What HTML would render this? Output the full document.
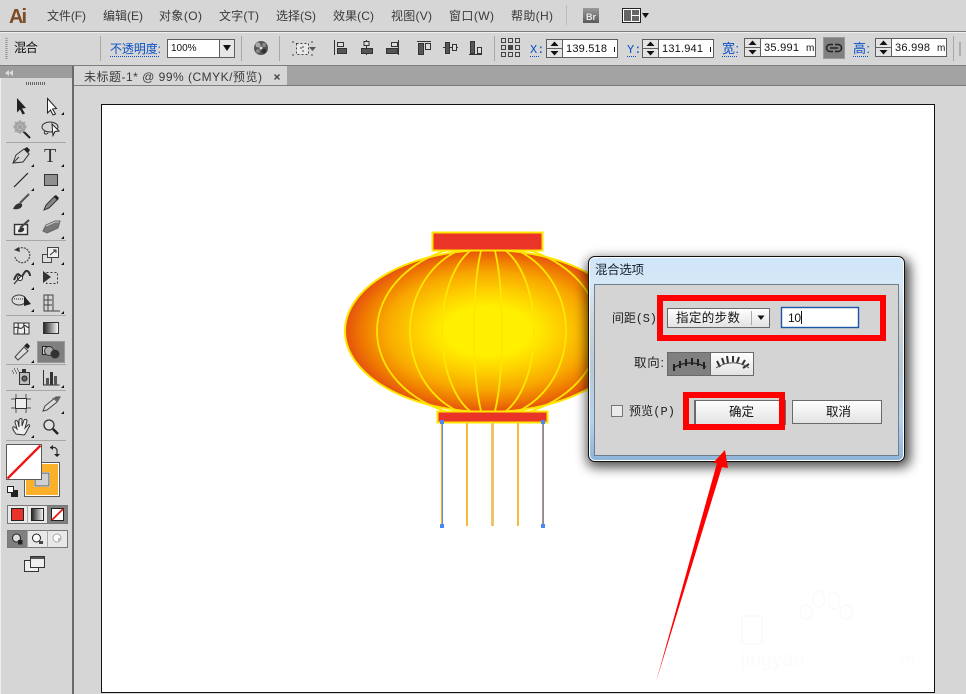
<!DOCTYPE html>
<html><head><meta charset="utf-8"><title>混合选项</title>
<style>
html,body{margin:0;padding:0;background:#d6d6d6;width:966px;height:694px;overflow:hidden}
svg{display:block}
text{font-family:"Liberation Sans","Noto Sans CJK SC",sans-serif;font-size:12px;fill:#2a2a2a}
.b{fill:#0a4fc4}
.d{stroke:#0a4fc4;stroke-width:1;stroke-dasharray:1 1;fill:none}
.m{fill:#3a3a3a}
.t{font-family:"Liberation Mono","Noto Sans CJK SC",monospace}
.n{fill:#111;font-size:11px}
</style></head><body>
<svg width="966" height="694" viewBox="0 0 966 694" xmlns="http://www.w3.org/2000/svg">
<defs>
<radialGradient id="lg" cx="488" cy="331" r="1" gradientUnits="userSpaceOnUse" gradientTransform="translate(488 331) scale(143 81) translate(-488 -331)">
<stop offset="0.3" stop-color="#fff000"/><stop offset="0.5" stop-color="#fed000"/><stop offset="0.72" stop-color="#f8a800"/><stop offset="0.88" stop-color="#ef7a00"/><stop offset="1" stop-color="#e6500f"/>
</radialGradient>
<clipPath id="cl"><rect x="340" y="251" width="300" height="160"/></clipPath>
<linearGradient id="bt" x1="0" y1="0" x2="0" y2="1"><stop offset="0" stop-color="#ffffff"/><stop offset="1" stop-color="#e2e2e2"/></linearGradient>
<linearGradient id="fr" x1="0" y1="0" x2="0" y2="1"><stop offset="0" stop-color="#cfe5f9"/><stop offset="0.13" stop-color="#d6e8f8"/><stop offset="0.3" stop-color="#cfd6da"/><stop offset="0.55" stop-color="#b9c9d6"/><stop offset="0.8" stop-color="#b4d2ee"/><stop offset="1" stop-color="#8fb5da"/></linearGradient>
<linearGradient id="gr" x1="0" y1="0" x2="1" y2="0"><stop offset="0" stop-color="#222"/><stop offset="1" stop-color="#fff"/></linearGradient>
<linearGradient id="grv" x1="0" y1="0" x2="0" y2="1"><stop offset="0" stop-color="#9a9a9a"/><stop offset="1" stop-color="#5a5a5a"/></linearGradient>
<filter id="sh" x="-20%" y="-20%" width="140%" height="140%"><feGaussianBlur stdDeviation="6"/></filter>
</defs>

<rect width="966" height="694" fill="#d6d6d6"/>

<!-- menu bar -->
<text x="9" y="23" style="font-size:20px;font-weight:bold;fill:#7a4c28" textLength="18">Ai</text>
<g class="menu">
<text class="m" x="47" y="20" textLength="39">文件(F)</text>
<text class="m" x="103" y="20" textLength="40">编辑(E)</text>
<text class="m" x="159" y="20" textLength="43">对象(O)</text>
<text class="m" x="219" y="20" textLength="40">文字(T)</text>
<text class="m" x="276" y="20" textLength="40">选择(S)</text>
<text class="m" x="333" y="20" textLength="41">效果(C)</text>
<text class="m" x="391" y="20" textLength="41">视图(V)</text>
<text class="m" x="449" y="20" textLength="45">窗口(W)</text>
<text class="m" x="511" y="20" textLength="42">帮助(H)</text>
</g>
<rect x="566" y="5" width="1" height="20" fill="#bcbcbc"/>
<rect x="583" y="8" width="16" height="15" fill="url(#grv)"/>
<text x="586" y="20" style="font-size:9px;font-weight:bold;fill:#e8e8e8">Br</text>
<rect x="622.500" y="8.500" width="18" height="14" fill="#fff" stroke="#222"/>
<rect x="624" y="10" width="7" height="11" fill="#666"/><rect x="632" y="10" width="7" height="5" fill="#666"/><rect x="632" y="16" width="7" height="5" fill="#666"/>
<path d="M642 13h7l-3.500 5z" fill="#111"/>

<rect x="0" y="31" width="966" height="1" fill="#7d7d7d"/>
<rect x="0" y="32" width="966" height="1" fill="#efefef"/>

<!-- control bar -->
<path d="M6.500 38v21" stroke="#8c8c8c" stroke-width="2" stroke-dasharray="1 1"/>
<text x="14" y="52" style="font-size:12.500px;fill:#111" textLength="24">混合</text>
<rect x="100" y="36" width="1" height="25" fill="#a8a8a8"/>
<text class="b" x="110" y="53" textLength="51">不透明度:</text><path class="d" d="M110 56.500h50"/>
<rect x="167.500" y="39.500" width="67" height="18" fill="#fff" stroke="#5e5e5e"/>
<text x="171" y="51" class="n" style="font-size:10px">100%</text>
<rect x="219.500" y="39.500" width="15" height="18" fill="#e6e6e6" stroke="#5e5e5e"/>
<path d="M223 45h8l-4 6z" fill="#111"/>
<rect x="241" y="36" width="1" height="25" fill="#a8a8a8"/>
<circle cx="261" cy="48" r="7" fill="#555"/><circle cx="258" cy="45" r="2.500" fill="#aaa"/><circle cx="264" cy="45" r="2" fill="#888"/><circle cx="258" cy="51" r="2" fill="#888"/><circle cx="264" cy="51" r="2.500" fill="#333"/><circle cx="261" cy="48" r="1.500" fill="#ddd"/>
<rect x="279" y="36" width="1" height="25" fill="#a8a8a8"/>
<rect x="296.500" y="43.500" width="12" height="11" fill="#e8e8e8" stroke="#444" stroke-dasharray="2 2"/>
<path d="M293 41v2M293 56v-2M312 41v2M312 56v-2M300 48h2M303 46v2M303 50v2" stroke="#444" fill="none"/>
<path d="M309 47h7l-3.500 4z" fill="#555"/>
<g fill="#555" stroke="#333">
<path d="M334.500 40v15" fill="none"/><rect x="337.500" y="42.500" width="6" height="4" fill="#ddd"/><rect x="337.500" y="48.500" width="9" height="5"/>
<path d="M366.500 40v15" fill="none"/><rect x="364" y="41.500" width="5" height="4" fill="#ddd"/><rect x="361.500" y="48.500" width="11" height="5"/>
<path d="M398.500 40v15" fill="none"/><rect x="391.500" y="42.500" width="6" height="4" fill="#ddd"/><rect x="386.500" y="48.500" width="11" height="5"/>
<path d="M417 41.500h14" fill="none"/><rect x="418.500" y="43.500" width="5" height="11"/><rect x="425.500" y="43.500" width="5" height="6" fill="#ddd"/>
<path d="M443 47.500h15" fill="none"/><rect x="445.500" y="42.500" width="4" height="11"/><rect x="452.500" y="44.500" width="4" height="6" fill="#ddd"/>
<path d="M469 54.500h13" fill="none"/><rect x="470.500" y="41.500" width="4" height="12"/><rect x="477.500" y="47.500" width="4" height="6" fill="#ddd"/>
</g>
<rect x="494" y="36" width="1" height="25" fill="#a8a8a8"/>
<!-- reference point -->
<g fill="#d6d6d6" stroke="#444">
<rect x="501.500" y="38.500" width="4" height="4"/><rect x="508.500" y="38.500" width="4" height="4"/><rect x="515.500" y="38.500" width="4" height="4"/>
<rect x="501.500" y="45.500" width="4" height="4"/><rect x="508.500" y="45.500" width="4" height="4" fill="#444"/><rect x="515.500" y="45.500" width="4" height="4"/>
<rect x="501.500" y="52.500" width="4" height="4"/><rect x="508.500" y="52.500" width="4" height="4"/><rect x="515.500" y="52.500" width="4" height="4"/>
</g>
<!-- X -->
<text class="b t" x="530" y="53">X:</text><path class="d" d="M530 56.500h9"/>
<rect x="546.500" y="39.500" width="16" height="18" fill="#e4e4e4" stroke="#5e5e5e"/><path d="M546 48.500h16" stroke="#5e5e5e"/><path d="M550.500 46h8l-4-4.500zM550.500 51h8l-4 4.500z" fill="#111"/>
<rect x="562.500" y="39.500" width="55" height="18" fill="#fff" stroke="#5e5e5e"/>
<text x="566" y="52" class="n" textLength="41">139.518</text><rect x="614" y="47" width="1" height="5" fill="#111"/>
<!-- Y -->
<text class="b t" x="627" y="53">Y:</text><path class="d" d="M627 56.500h9"/>
<rect x="642.500" y="39.500" width="16" height="18" fill="#e4e4e4" stroke="#5e5e5e"/><path d="M642 48.500h16" stroke="#5e5e5e"/><path d="M646.500 46h8l-4-4.500zM646.500 51h8l-4 4.500z" fill="#111"/>
<rect x="658.500" y="39.500" width="55" height="18" fill="#fff" stroke="#5e5e5e"/>
<text x="662" y="52" class="n" textLength="41">131.941</text><rect x="710" y="47" width="1" height="5" fill="#111"/>
<!-- W -->
<text class="b" x="722" y="53" style="font-size:13px" textLength="17">宽:</text><path class="d" d="M722 56.500h16"/>
<rect x="744.500" y="38.500" width="16" height="18" fill="#e4e4e4" stroke="#5e5e5e"/><path d="M744 47.500h16" stroke="#5e5e5e"/><path d="M748.500 45h8l-4-4.500zM748.500 50h8l-4 4.500z" fill="#111"/>
<rect x="760.500" y="38.500" width="55" height="18" fill="#fff" stroke="#5e5e5e"/>
<text x="764" y="51" class="n" textLength="35">35.991</text><text x="806" y="51" class="n" style="font-size:10px">m</text>
<!-- link -->
<rect x="823.500" y="37.500" width="21" height="21" fill="#808080" stroke="#999"/>
<path d="M833 44.500h-3a3.500 3.500 0 0 0 0 7h3M835 44.500h3a3.500 3.500 0 0 1 0 7h-3M830 48h8" fill="none" stroke="#222" stroke-width="1.500"/>
<!-- H -->
<text class="b" x="853" y="53" style="font-size:13px" textLength="17">高:</text><path class="d" d="M853 56.500h16"/>
<rect x="875.500" y="38.500" width="16" height="18" fill="#e4e4e4" stroke="#5e5e5e"/><path d="M875 47.500h16" stroke="#5e5e5e"/><path d="M879.500 45h8l-4-4.500zM879.500 50h8l-4 4.500z" fill="#111"/>
<rect x="891.500" y="38.500" width="55" height="18" fill="#fff" stroke="#5e5e5e"/>
<text x="895" y="51" class="n" textLength="35">36.998</text><text x="937" y="51" class="n" style="font-size:10px">m</text>
<rect x="953" y="36" width="1" height="25" fill="#a8a8a8"/>
<path d="M960 42v14" stroke="#888"/>

<rect x="0" y="65" width="966" height="1" fill="#7d7d7d"/>

<!-- document tab row -->
<rect x="287" y="66" width="679" height="19" fill="#a3a3a3"/>
<rect x="73" y="66" width="214" height="19" fill="#d6d6d6"/>
<rect x="73" y="66" width="1" height="19" fill="#eee"/>
<rect x="73" y="85" width="893" height="1" fill="#808080"/>
<rect x="287" y="85" width="679" height="1" fill="#777"/>
<text x="84" y="81" class="m" style="font-size:12px" textLength="178">未标题-1* @ 99% (CMYK/预览)</text>
<path d="M274.500 74.500l5 5M279.500 74.500l-5 5" stroke="#444" stroke-width="1.400"/>

<!-- tool panel -->
<rect x="0" y="66" width="72" height="12" fill="#9c9c9c"/>
<rect x="72" y="66" width="2" height="628" fill="#6a6a6a"/>
<rect x="0" y="78" width="1" height="616" fill="#eee"/>
<path d="M9 70l-4 3 4 3zM13 70l-4 3 4 3z" fill="#ddd"/>
<path d="M26 83.500h19" stroke="#666" stroke-width="3" stroke-dasharray="1 1"/>
<g fill="#a8a8a8">
<rect x="6" y="142" width="60" height="1"/><rect x="6" y="240" width="60" height="1"/><rect x="6" y="315" width="60" height="1"/><rect x="6" y="364" width="60" height="1"/><rect x="6" y="390" width="60" height="1"/><rect x="6" y="440" width="60" height="1"/>
</g>
<!-- corner triangles -->
<g fill="#111">
<path d="M64 112v3h-3zM34 164v3h-3zM64 164v3h-3zM34 188v3h-3zM64 188v3h-3zM64 212v3h-3zM64 236v3h-3zM34 262v3h-3zM64 262v3h-3zM34 287v3h-3zM64 311v3h-3zM34 309v3h-3zM34 360v3h-3zM34 385v3h-3zM64 385v3h-3zM64 411v3h-3zM34 435v3h-3z"/>
</g>
<!-- selection -->
<path d="M17 98l9 10-4 .5 3 5-2.500 1-2.500-5-3 3z" fill="#222"/>
<path d="M47.500 98.500l9 10-4 .5 3 5-2.500 1-2.500-5-3 3z" fill="#fff" stroke="#222"/>
<!-- magic wand -->
<path d="M23 131l7 7" stroke="#222" stroke-width="2"/>
<circle cx="20" cy="127" r="6" fill="#aaa"/><circle cx="20" cy="127" r="3" fill="#ddd"/><path d="M20 120v14M13 127h14M15 122l10 10M25 122l-10 10" stroke="#999"/>
<!-- lasso -->
<ellipse cx="50" cy="127" rx="8" ry="5" fill="none" stroke="#333"/><path d="M45 131c-2 3 1 4 3 2" fill="none" stroke="#333"/>
<path d="M52 124l7 7-4 .5-2 4z" fill="#fff" stroke="#222"/>
<!-- pen -->
<path d="M13 163l3-8 8-6 5 5-6 8z" fill="#d6d6d6" stroke="#333"/><path d="M24 149l3-2 3 3-2 3z" fill="#222"/><path d="M13 163l6-6" stroke="#333"/>
<!-- type -->
<text x="44" y="162" style="font-family:'Liberation Serif',serif;font-size:20px;fill:#333">T</text>
<!-- line -->
<path d="M14 187l14-14" stroke="#222" stroke-width="1.200"/>
<!-- rect -->
<rect x="44.500" y="174.500" width="13" height="11" fill="#8f8f8f" stroke="#333"/>
<!-- brush -->
<path d="M20 203l9-9" stroke="#555" stroke-width="2"/><path d="M13 209c2-5 6-7 9-5 1 3-2 6-9 5z" fill="#333"/>
<!-- pencil -->
<path d="M44 210l2-5 9-9 3 3-9 9z" fill="#888" stroke="#333"/><path d="M54 197l2-2 3 3-2 2z" fill="#222"/>
<!-- blob brush -->
<rect x="14.500" y="224.500" width="13" height="10" fill="#eee" stroke="#333" stroke-width="1.400"/><path d="M20 228l9-8" stroke="#444" stroke-width="2"/><path d="M18 232c0-4 4-5 6-4 1 3-2 5-6 4z" fill="#333"/>
<!-- eraser -->
<path d="M43 231l3-6 9-4 5 0-2 7-11 5z" fill="#777" stroke="#666"/><path d="M46 226l9-4 4 0" stroke="#ccc" fill="none"/>
<!-- rotate -->
<path d="M18 249a7.500 7.500 0 1 1-3 8" fill="none" stroke="#444" stroke-width="1.200" stroke-dasharray="2 1"/><path d="M14 250l5-3 1 5z" fill="#333"/>
<!-- scale -->
<rect x="42.500" y="254.500" width="9" height="8" fill="#ddd" stroke="#444"/><rect x="47.500" y="247.500" width="11" height="10" fill="#eee" stroke="#444"/><path d="M50 255l6-5M53 250h3v3" stroke="#333" fill="none"/>
<!-- warp -->
<path d="M14 280c2-5 4-8 6-4 2 4 4-6 7-5 3 1 3 5 3 5" fill="none" stroke="#333" stroke-width="2"/><circle cx="20" cy="278" r="2.500" fill="#fff" stroke="#222"/><path d="M14 284l7-8" stroke="#222"/>
<!-- free transform -->
<rect x="46.500" y="272.500" width="11" height="11" fill="none" stroke="#333" stroke-dasharray="2 2"/><path d="M43 271l8 6-8 6z" fill="#333"/>
<!-- shape builder -->
<ellipse cx="19" cy="300" rx="7" ry="5" fill="#ddd" stroke="#444"/><path d="M14 299h10" stroke="#222" stroke-dasharray="1 1"/><path d="M24 296l7 8-7 2z" fill="#222"/>
<!-- perspective -->
<path d="M44 295h9v16h-9zM44 300h8M44 305h8M48 295v16M44 311h16" fill="none" stroke="#444"/>
<!-- mesh -->
<rect x="14" y="323" width="15" height="11" fill="#eee" stroke="#333"/><path d="M14 328c4-3 6 3 9-1s4 2 6 0M18 323c1 4-1 7 0 11M24 323c-1 4 2 7 0 11" fill="none" stroke="#222"/>
<!-- gradient -->
<rect x="43.500" y="322.500" width="15" height="11" fill="url(#gr)" stroke="#333"/>
<!-- eyedropper -->
<path d="M15 357l9-10 4 4-10 9z" fill="#ddd" stroke="#444"/><path d="M24 346l3-3 3 3-2 3z" fill="#222"/>
<!-- blend (selected) -->
<rect x="37.500" y="341.500" width="27" height="21" fill="#808080" stroke="#999"/>
<rect x="42.500" y="346.500" width="8" height="8" fill="#ccc" stroke="#222"/><circle cx="49" cy="351" r="4.500" fill="#aaa" stroke="#333"/><circle cx="55" cy="354" r="4.500" fill="#333"/>
<!-- symbol sprayer -->
<rect x="19.500" y="372.500" width="10" height="12" fill="#bbb" stroke="#333"/><circle cx="24.500" cy="378.500" r="2.500" fill="#666" stroke="#222"/><path d="M12 371h1M15 371h1M18 371h1M13 373h1M16 373h1M14 369h1M17 369h1" stroke="#222"/><rect x="22" y="369" width="4" height="3" fill="#333"/>
<!-- graph -->
<path d="M43.500 370v15h16" fill="none" stroke="#333"/><rect x="46" y="378" width="3" height="7" fill="#555"/><rect x="50" y="372" width="3" height="13" fill="#333"/><rect x="54" y="376" width="3" height="9" fill="#555"/>
<!-- artboard -->
<rect x="15.500" y="398.500" width="11" height="10" fill="#eee" stroke="#333"/><path d="M11 399h4M27 399h4M11 408h4M27 408h4M16 394v4M26 394v4M16 409v4M26 409v4" stroke="#555"/>
<!-- slice -->
<path d="M43 411l2-5 11-9 4 0-3 5-10 8z" fill="#ddd" stroke="#444"/><path d="M52 398l8-1-3 5z" fill="#666"/>
<!-- hand -->
<path d="M16 434c-2-3-4-5-3-7 1-1 3 1 4 2l-2-7c0-2 2-2 3 0l1 5 0-7c1-2 3-2 3 0l0 6 2-6c1-1 3-1 3 1l-2 7 3-3c2-1 2 1 1 2-2 3-3 7-5 8z" fill="#eee" stroke="#333"/>
<!-- zoom -->
<circle cx="49" cy="425" r="5" fill="#ddd" stroke="#333" stroke-width="1.300"/><path d="M53 429l5 5" stroke="#222" stroke-width="2.500"/>

<!-- fill & stroke -->
<rect x="24.500" y="462.500" width="35" height="34" fill="#fff" stroke="#5a5a5a"/>
<rect x="26" y="464" width="32" height="31" fill="#fbb02a"/>
<rect x="34" y="472" width="16" height="15" fill="#fff"/>
<rect x="35" y="473" width="14" height="13" fill="#d0d0d0" stroke="#5a5a5a"/>
<rect x="6.500" y="444.500" width="35" height="35" fill="#fff" stroke="#5a5a5a"/>
<path d="M7.500 478.500l33-33" stroke="#f01515" stroke-width="2.300"/>
<path d="M50 447.500h5l2 2v6" fill="none" stroke="#333" stroke-width="1.200"/><path d="M53 445l-3 2.500 3 2.500zM54 454l3 3 3-3z" fill="#222"/>
<rect x="11.500" y="490.500" width="6" height="6" fill="#222" stroke="#222"/>
<rect x="7.500" y="486.500" width="6" height="6" fill="#fff" stroke="#222"/>
<!-- color buttons -->
<rect x="7.500" y="505.500" width="60" height="18" fill="#e8e8e8" stroke="#777"/>
<rect x="47.500" y="505.500" width="20" height="18" fill="#808080" stroke="#777"/>
<rect x="11.500" y="508.500" width="12" height="12" fill="#e8322a" stroke="#222"/>
<rect x="31.500" y="508.500" width="12" height="12" fill="url(#gr)" stroke="#222"/>
<rect x="51.500" y="508.500" width="12" height="12" fill="#fff" stroke="#222"/><path d="M52 520l11-11" stroke="#f01515" stroke-width="1.800"/>
<path d="M27.500 505.500v18" stroke="#aaa"/>
<!-- draw modes -->
<rect x="7.500" y="530.500" width="60" height="17" fill="#e8e8e8" stroke="#777"/>
<rect x="7.500" y="530.500" width="20" height="17" fill="#808080" stroke="#777"/>
<path d="M27.500 530.500v17M47.500 530.500v17" stroke="#aaa"/>
<circle cx="16.500" cy="538" r="4" fill="#ddd" stroke="#222"/><rect x="18" y="540" width="4.500" height="4.500" fill="#222"/>
<circle cx="36.500" cy="538" r="4" fill="#fff" stroke="#222"/><rect x="39" y="541" width="4" height="3" fill="#444"/>
<circle cx="57" cy="538" r="4" fill="#fff" stroke="#aaa"/><rect x="58" y="538" width="3" height="3" fill="#bbb"/>
<!-- screen mode -->
<rect x="24.500" y="560.500" width="14" height="11" fill="#eee" stroke="#333"/>
<rect x="30.500" y="556.500" width="14" height="11" fill="#eee" stroke="#333"/><rect x="31" y="557" width="13" height="2" fill="#555"/>

<!-- artboard -->
<rect x="101.500" y="104.500" width="833" height="588" fill="#fff" stroke="#111"/>

<!-- lantern -->
<ellipse cx="488" cy="331" rx="143" ry="81" fill="url(#lg)" stroke="#ffe600" stroke-width="2"/>
<g clip-path="url(#cl)" fill="none" stroke="#ffe600" stroke-width="1.800">
<ellipse cx="488" cy="331" rx="111" ry="87"/>
<ellipse cx="488" cy="331" rx="78" ry="87"/>
<ellipse cx="488" cy="331" rx="46" ry="87"/>
<ellipse cx="488" cy="331" rx="14" ry="92"/>
</g>
<rect x="432.500" y="232.500" width="110" height="18" fill="#ea3428" stroke="#ffe600" stroke-width="2"/>
<rect x="437.500" y="411.500" width="110" height="11" fill="#ea3428" stroke="#ffe600" stroke-width="2"/>
<rect x="441" y="423" width="1" height="103" fill="#f5a623"/><rect x="442" y="423" width="1" height="103" fill="#5b8ff0"/>
<rect x="466" y="423" width="2" height="103" fill="#fbb83a"/>
<rect x="491" y="423" width="3" height="103" fill="#eec36a"/>
<rect x="517" y="423" width="2" height="103" fill="#fbb83a"/>
<rect x="542" y="423" width="1" height="103" fill="#d9912a"/><rect x="543" y="423" width="1" height="103" fill="#5b8ff0"/>
<g fill="#4a86f5"><rect x="440" y="420" width="4" height="4"/><rect x="541" y="420" width="4" height="4"/><rect x="440" y="524" width="4" height="4"/><rect x="541" y="524" width="4" height="4"/></g>

<!-- watermark -->
<g fill="none" stroke="#fafafa" stroke-width="1.500">
<rect x="742" y="616" width="20" height="28" rx="2"/>
<ellipse cx="819" cy="599" rx="6" ry="8"/><ellipse cx="834" cy="601" rx="6" ry="8"/><ellipse cx="806" cy="612" rx="6" ry="7"/><ellipse cx="846" cy="612" rx="6" ry="7"/>
</g>
<text x="741" y="666" style="font-size:20px;fill:#fbfbfb">jingyan</text>
<text x="900" y="666" style="font-size:18px;fill:#fbfbfb">m</text>

<!-- dialog shadow -->
<rect x="587" y="259" width="323" height="208" rx="8" fill="#000" opacity="0.72" filter="url(#sh)"/>
<!-- dialog -->
<rect x="588" y="256" width="317" height="206" rx="7" fill="#111"/>
<rect x="589" y="257" width="315" height="204" rx="6" fill="#fff"/>
<rect x="590" y="258" width="313" height="202" rx="5" fill="url(#fr)"/>
<rect x="594.500" y="284.500" width="304" height="171" fill="#d4d4d4" stroke="#6e7e8a"/>
<text x="595" y="274" style="font-size:12.500px;fill:#1a2430" textLength="49">混合选项</text>

<text x="612" y="322" class="t" style="fill:#222;font-size:12px" textLength="45">间距(S)</text>
<rect x="667.500" y="308.500" width="102" height="19" fill="url(#bt)" stroke="#6a6a6a"/>
<text x="676" y="322" style="font-size:12.500px;fill:#111" textLength="64">指定的步数</text>
<rect x="751" y="311" width="1" height="14" fill="#aaa"/>
<path d="M757.500 315.500h7l-3.500 4.500z" fill="#111"/>
<rect x="781.500" y="307.500" width="77" height="20" fill="#fff" stroke="#1c54a8" stroke-width="1.400"/>
<text x="788" y="322" style="fill:#111;font-size:12px" textLength="13">10</text>
<rect x="801" y="311" width="1" height="13" fill="#111"/>

<text x="634" y="367" style="fill:#222;font-size:12.500px" textLength="30">取向:</text>
<rect x="667.500" y="352.500" width="43" height="23" fill="#808080" stroke="#6a6a6a"/>
<rect x="710.500" y="352.500" width="43" height="23" fill="url(#bt)" stroke="#6a6a6a"/>
<path d="M674 371v-7M680 368v-7M686 366v-7M692 365v-7M698 366v-7M704 369v-7" stroke="#222" stroke-width="2"/>
<path d="M673 368c10-6 22-7 33-1" fill="none" stroke="#222" stroke-width="1.300"/>
<path d="M717 361l3 6M722 358l2 6M727 356l1 7M733 356v6M739 357l-2 6M745 360l-3 5M749 364l-6 4" stroke="#333" stroke-width="2"/>
<path d="M716 368c10-7 24-7 33 0" fill="none" stroke="#555"/>

<rect x="611.500" y="405.500" width="11" height="11" fill="#eaeaea" stroke="#777"/>
<text x="629" y="415" class="t" style="fill:#222;font-size:12px" textLength="46">预览(P)</text>

<rect x="694.500" y="400.500" width="91" height="24" fill="url(#bt)" stroke="#6a6a6a"/>
<rect x="694" y="400" width="2" height="25" fill="#6a6a6a"/>
<text x="729" y="416" style="fill:#111;font-size:12.500px" textLength="25">确定</text>
<rect x="792.500" y="400.500" width="89" height="23" fill="url(#bt)" stroke="#6a6a6a"/>
<text x="826" y="416" style="fill:#111;font-size:12.500px" textLength="25">取消</text>

<!-- annotations -->
<rect x="660" y="298" width="223" height="40" fill="none" stroke="#ff0000" stroke-width="6"/>
<rect x="686" y="395" width="96" height="32" fill="none" stroke="#ff0000" stroke-width="6"/>
<path d="M725 450L713 463L717 463L656 682L722 467L728 468Z" fill="#ff0000"/>
</svg>
</body></html>
